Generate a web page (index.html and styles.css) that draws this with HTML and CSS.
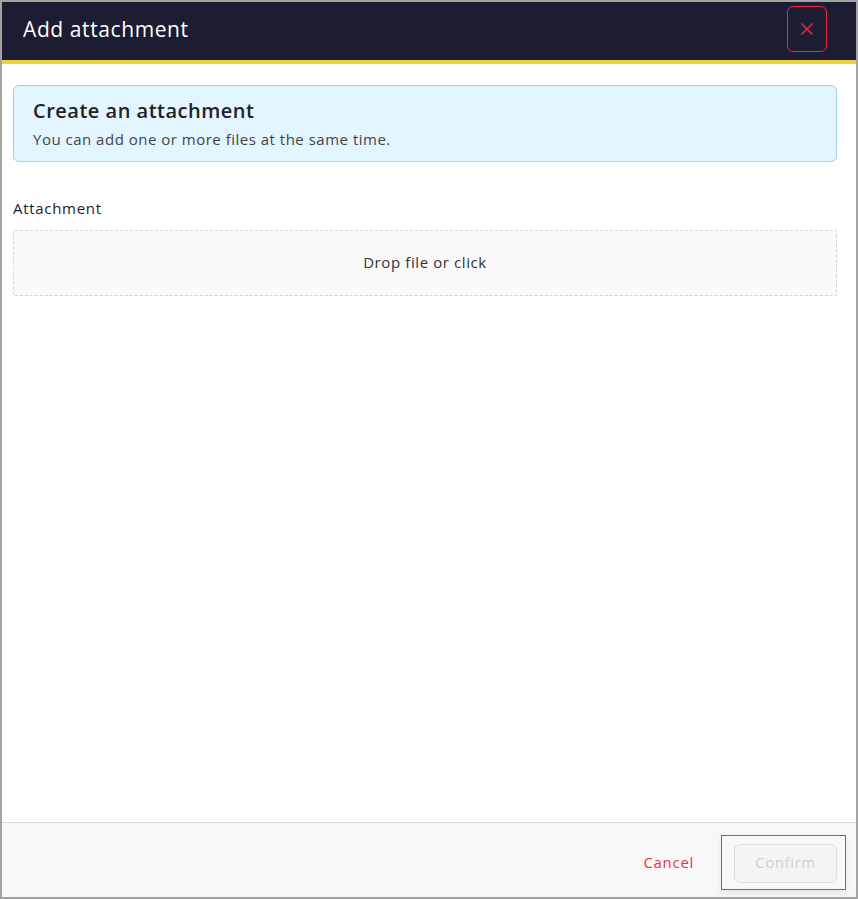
FILE: index.html
```html
<!DOCTYPE html>
<html>
<head>
<meta charset="utf-8">
<link rel="stylesheet" href="styles.css">
</head>
<body>
<div class="modal">
  <header class="modal-header">
    <h1 class="modal-title">Add attachment</h1>
    <button class="close-btn" aria-label="Close">
      <svg width="14" height="14" viewBox="0 0 14 14"><path d="M1.5 1.5L12.5 12.5M12.5 1.5L1.5 12.5" stroke="#e8283f" stroke-width="1.6" fill="none"/></svg>
    </button>
  </header>
  <main class="modal-body">
    <div class="info-box">
      <div class="info-title">Create an attachment</div>
      <div class="info-text">You can add one or more files at the same time.</div>
    </div>
    <div class="field">
      <label class="field-label">Attachment</label>
      <div class="dropzone">Drop file or click</div>
    </div>
  </main>
  <footer class="modal-footer">
    <button class="cancel-btn">Cancel</button>
    <div class="confirm-wrap">
      <button class="confirm-btn" disabled>Confirm</button>
    </div>
  </footer>
</div>
</body>
</html>
```
FILE: styles.css
```css
* { box-sizing: border-box; }
html, body { margin: 0; padding: 0; background: #fff; }
body { font-family: "Open Sans", "DejaVu Sans", sans-serif; }
.modal {
  width: 858px;
  height: 899px;
  border: 2px solid #a3a3a3;
  display: flex;
  flex-direction: column;
  background: #fff;
}
.modal-header {
  height: 62px;
  background: #1c1c33;
  border-bottom: 4px solid #ebd03c;
  display: flex;
  align-items: center;
  justify-content: space-between;
  padding: 0 29px 0 21px;
}
.modal-title {
  margin: 0;
  color: #fff;
  font-size: 21px;
  font-weight: 400;
  letter-spacing: 0.6px;
  position: relative;
  top: -2px;
}
.close-btn {
  width: 40px;
  height: 46px;
  border: 1px solid #e8283f;
  border-radius: 6px;
  background: transparent;
  display: flex;
  align-items: center;
  justify-content: center;
  padding: 0;
  position: relative;
  top: -2px;
}
.modal-body {
  flex: 1;
  padding: 21px 19px 0 11px;
}
.info-box {
  background: #e3f5fe;
  border: 1px solid #9dd2f3;
  border-radius: 6px;
  height: 77px;
  padding: 11px 19px;
}
.info-title {
  font-size: 20px;
  font-weight: 600;
  color: #222;
  line-height: 28px;
  letter-spacing: 0.5px;
}
.info-text {
  font-size: 15px;
  color: #444;
  margin-top: 4px;
  letter-spacing: 0.5px;
}
.field { margin-top: 36px; }
.field-label {
  display: block;
  font-size: 15px;
  color: #222;
  letter-spacing: 0.7px;
  line-height: 20px;
}
.dropzone {
  margin-top: 12px;
  height: 66px;
  border: 1px dashed #d6d6d6;
  border-radius: 2px;
  background: #fafafa;
  display: flex;
  align-items: center;
  justify-content: center;
  font-size: 15px;
  color: #333;
  letter-spacing: 0.6px;
  padding-bottom: 2px;
}
.modal-footer {
  height: 75px;
  border-top: 1px solid #d9d9d9;
  background: #f8f8f8;
  display: flex;
  align-items: center;
  justify-content: flex-end;
  padding: 0 10px 0 0;
}
.cancel-btn {
  background: none;
  border: none;
  color: #e8334a;
  font-family: inherit;
  font-size: 15px;
  letter-spacing: 0.7px;
  margin-right: 27px;
  padding: 0;
  position: relative;
  top: 2px;
}
.confirm-wrap {
  outline: 1px solid #ff3030;
  outline-offset: -1px;
  padding: 9px 9px 7px 13px;
  box-shadow: 0 3px 6px rgba(0,0,0,0.08);
  margin-top: 4px;
}
.confirm-btn {
  display: block;
  width: 103px;
  height: 39px;
  border: 1px solid #dedede;
  border-radius: 6px;
  background: #f4f4f4;
  color: #cfcfcf;
  font-family: inherit;
  font-size: 15px;
  letter-spacing: 0.6px;
  padding: 0 0 2px;
}
```
